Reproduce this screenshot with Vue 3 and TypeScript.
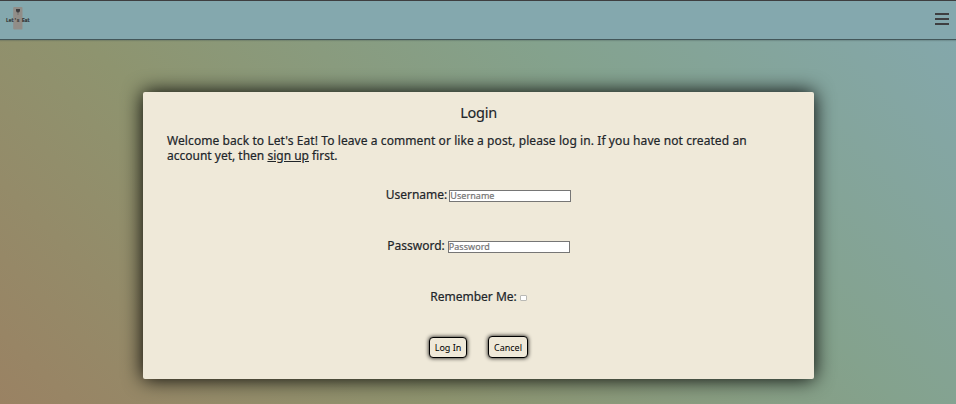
<script setup lang="ts">
import { ref } from 'vue'

const username = ref('')
const password = ref('')
const remember = ref(false)
</script>

<template>
  <div class="page">
    <header class="navbar">
      <svg class="logo" viewBox="0 0 26 26" aria-label="Let's Eat">
        <rect x="8.2" y="1" width="9.3" height="22.5" rx="1" fill="#918d88" />
        <path d="M11 3h4v2l-1 1.5h-2L11 5z" fill="#3e3e40" />
        <path d="M13 6v3" stroke="#666" stroke-width=".7" />
        <text x="1" y="16.3" textLength="24" lengthAdjust="spacingAndGlyphs">Let's Eat</text>
      </svg>
      <button class="menu" type="button" aria-label="Menu">
        <span></span><span></span><span></span>
      </button>
    </header>
    <main class="card">
      <h1>Login</h1>
      <p class="intro">
        <span class="line first">Welcome back to Let's Eat! To leave a comment or like a post, please log in. If you have not created an</span>
        <span class="line second">account yet, then <a href="#">sign up</a> first.</span>
      </p>
      <form @submit.prevent>
        <div class="field">
          <label for="username">Username:</label>
          <input id="username" v-model="username" type="text" placeholder="Username" />
        </div>
        <div class="field">
          <label class="pass" for="password">Password:</label>
          <input id="password" v-model="password" type="password" placeholder="Password" />
        </div>
        <div class="field">
          <label for="remember">Remember Me:</label>
          <input id="remember" v-model="remember" type="checkbox" />
        </div>
        <div class="actions">
          <button class="login" type="submit">Log In</button>
          <button class="cancel" type="button">Cancel</button>
        </div>
      </form>
    </main>
  </div>
</template>

<style>
body {
  margin: 0;
}
</style>

<style scoped>
* {
  box-sizing: border-box;
}
.page {
  height: 404px;
  overflow: hidden;
  background: linear-gradient(45deg, #9a8263, #8e946f 33%, #84a28d 66%, #84a8ae);
  font-family: "Noto Sans", "Open Sans", sans-serif;
  color: #212529;
}
.navbar {
  height: 40px;
  display: flex;
  justify-content: space-between;
  padding: 5px 7px 0 5px;
  background: #84a8ae;
  border-top: 1px solid #3e3e40;
  border-bottom: 1px solid #43575a;
  box-shadow: 0 1px 1px rgba(60, 80, 80, 0.25);
}
.logo {
  width: 26px;
  height: 26px;
}
.logo text {
  font: bold 4.5px "Liberation Mono", monospace;
  fill: #333;
  stroke: #333;
  stroke-width: 0.2px;
}
.menu {
  width: 14px;
  height: 12px;
  margin-top: 7px;
  padding: 0;
  border: 0;
  background: none;
  display: flex;
  flex-direction: column;
  justify-content: space-between;
}
.menu span {
  width: 14px;
  height: 2px;
  background: #3e3e40;
}
.card {
  width: 671px;
  height: 287px;
  margin: 52px 0 0 143px;
  padding: 10px 24px 0;
  border-radius: 2px;
  background: #efe9d9;
  box-shadow: 0 0 20px 0 #000;
}
h1 {
  margin: 0;
  font-size: 14.5px;
  line-height: 20px;
  font-weight: 400;
  letter-spacing: -0.25px;
  text-align: center;
  -webkit-text-stroke: 0.15px;
}
.intro {
  margin: 11px 0 0;
  font-size: 12px;
  line-height: 15px;
  -webkit-text-stroke: 0.2px;
}
.line {
  display: block;
  white-space: nowrap;
}
.first {
  letter-spacing: 0.085px;
}
a {
  color: inherit;
}
form {
  padding-top: 24px;
}
.field {
  height: 16px;
  margin-bottom: 35px;
  display: flex;
  justify-content: center;
  align-items: center;
  gap: 2px;
}
label {
  font-size: 12px;
  line-height: 15px;
  padding-bottom: 2px;
  white-space: nowrap;
  -webkit-text-stroke: 0.2px;
}
.pass {
  padding-right: 1px;
}
.field input {
  width: 122px;
  height: 12px;
  margin: 2px 0 0;
  padding: 0 0 1px;
  border: 1px solid #767676;
  border-radius: 0;
  background: #fff;
  font: 9px/9px "Noto Sans", sans-serif;
  letter-spacing: 0.05px;
  outline: 0;
}
.field input::placeholder {
  color: #757575;
  opacity: 1;
  line-height: 9px;
  -webkit-text-stroke: 0.2px;
}
.field input[type="checkbox"] {
  appearance: none;
  width: 7px;
  height: 6px;
  margin-left: 1px;
  border: 1px solid #b9b9b5;
  border-radius: 1px;
}
.actions {
  display: flex;
  justify-content: center;
  align-items: flex-end;
  gap: 21px;
  margin-top: -4px;
  height: 22px;
}
.actions button {
  height: 21px;
  padding: 0;
  border: 1px solid #000;
  border-radius: 4px;
  background: #efe9d9;
  box-shadow: 0 0 4px #000;
  color: #000;
  font: 9px/18px "Noto Sans", sans-serif;
}
.actions .login {
  width: 38px;
}
.actions .cancel {
  width: 40px;
  height: 22px;
  padding-top: 1px;
}
</style>
